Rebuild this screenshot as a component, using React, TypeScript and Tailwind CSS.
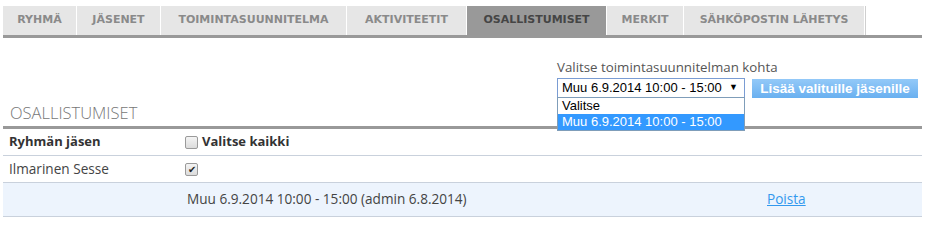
import React from 'react';

const tabs = [
    { label: 'RYHMÄ', w: 'w-[74px]' },
    { label: 'JÄSENET', w: 'w-[84px]' },
    { label: 'TOIMINTASUUNNITELMA', w: 'w-[186px]' },
    { label: 'AKTIVITEETIT', w: 'w-[120px]' },
    { label: 'OSALLISTUMISET', w: 'w-[140px]', active: true },
    { label: 'MERKIT', w: 'w-[77px]' },
    { label: 'SÄHKÖPOSTIN LÄHETYS', w: 'w-[181px]' },
];

const Checkbox = ({ checked }: { checked?: boolean }) => (
    <span className="inline-flex items-center justify-center w-[13px] h-[13px] rounded-[2px] border border-[#9a9a9a] bg-gradient-to-b from-[#f4f4f4] to-[#dcdcdc] text-[10px] leading-none text-[#222]">
        {checked ? '✔' : ''}
    </span>
);

const App = () => {
    return (
        <div className="w-[932px] h-[223px] bg-white overflow-hidden font-['Open_Sans',sans-serif] text-[13.6px] text-[#444]">
            {/* Tabs */}
            <div className="pt-[6px] pl-[3px] pr-[10px]">
                <div className="flex border-b-[3px] border-[#999]">
                    {tabs.map(t => (
                        <div
                            key={t.label}
                            className={`${t.w} h-[29px] flex items-center justify-center border-r border-white shadow-[1px_0_0_#cfcfcf] font-['DejaVu_Sans',sans-serif] font-bold text-[11px] ${t.active ? 'bg-[#999] text-[#454545]' : 'bg-[#e6e6e6] text-[#8a8a8a]'}`}
                        >
                            {t.label}
                        </div>
                    ))}
                </div>
            </div>

            {/* Select area */}
            <div className="flex justify-end pr-[14px] pt-[21px]">
                <div className="flex flex-col">
                    <div className="text-[13.3px] leading-[17px] text-[#555] mb-[2px] whitespace-nowrap">Valitse toimintasuunnitelman kohta</div>
                    <div className="flex items-start gap-[7px]">
                        <div className="relative">
                            <div className="w-[188px] h-[20px] border border-[#7a9cd3] bg-white flex items-center justify-between pl-[4px] pr-[6px] font-['Liberation_Sans',sans-serif] text-[13px] text-black whitespace-nowrap">
                                <span>Muu 6.9.2014 10:00 - 15:00</span>
                                <span className="text-[9px]">▼</span>
                            </div>
                            <div className="absolute left-0 top-[19px] z-10 w-[188px] border border-[#7f9db9] bg-white font-['Liberation_Sans',sans-serif] text-[13px] leading-[16px] whitespace-nowrap">
                                <div className="px-[4px] text-black">Valitse</div>
                                <div className="px-[4px] bg-[#3399ff] text-white">Muu 6.9.2014 10:00 - 15:00</div>
                            </div>
                        </div>
                        <button className="w-[166px] h-[19px] mt-[1px] bg-gradient-to-b from-[#93c9f8] to-[#69b0f0] text-white font-bold font-['Liberation_Sans',sans-serif] text-[13.5px] leading-none whitespace-nowrap">
                            Lisää valituille jäsenille
                        </button>
                    </div>
                </div>
            </div>

            {/* Heading */}
            <div className="pl-[10px] pt-[4px] text-[16.5px] leading-[22px] text-[#777] font-light">OSALLISTUMISET</div>

            {/* Table */}
            <div className="ml-[3px] w-[919px] mt-[2px] border-t-[3px] border-[#999]">
                <div className="flex items-center h-[27px] border-b border-[#c9d1dc] font-bold text-[13px] text-[#333]">
                    <div className="w-[182px] pl-[6px]">Ryhmän jäsen</div>
                    <div className="flex items-center gap-[4px]">
                        <Checkbox />
                        <span>Valitse kaikki</span>
                    </div>
                </div>
                <div className="flex items-center h-[27px] border-b border-[#c9d1dc] text-[#444]">
                    <div className="w-[182px] pl-[6px]">Ilmarinen Sesse</div>
                    <Checkbox checked />
                </div>
                <div className="flex items-center h-[34px] border-b border-[#c9d1dc] bg-[#edf4fd] text-[#444]">
                    <div className="w-[184px]" />
                    <div className="w-[580px]">Muu 6.9.2014 10:00 - 15:00 (admin 6.8.2014)</div>
                    <a className="text-[#3399ee] underline">Poista</a>
                </div>
            </div>
        </div>
    );
};

export default App;
